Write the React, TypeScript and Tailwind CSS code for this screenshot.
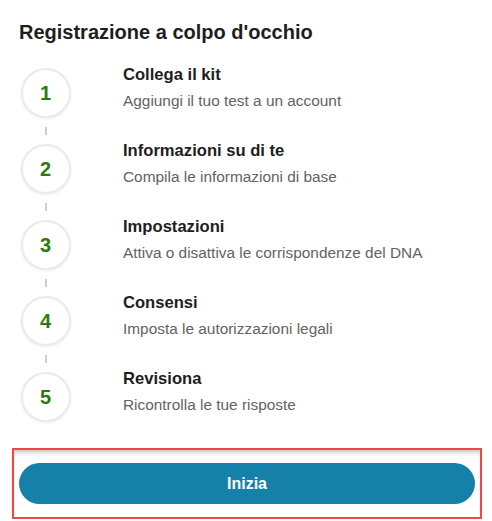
import React from "react";

const steps = [
  { n: 1, title: "Collega il kit", text: "Aggiungi il tuo test a un account" },
  { n: 2, title: "Informazioni su di te", text: "Compila le informazioni di base" },
  { n: 3, title: "Impostazioni", text: "Attiva o disattiva le corrispondenze del DNA" },
  { n: 4, title: "Consensi", text: "Imposta le autorizzazioni legali" },
  { n: 5, title: "Revisiona", text: "Ricontrolla le tue risposte" },
];

export default function App() {
  return (
    <div
      className="w-[492px] h-[521px] bg-white overflow-hidden"
      style={{ fontFamily: '"Liberation Sans", Arial, sans-serif' }}
    >
      <div className="pl-[19px] pt-[20px]">
        <h1 className="text-[20px] leading-6 font-bold text-[#1e1e1e]">
          Registrazione a colpo d'occhio
        </h1>

        <ol className="mt-[24px]">
          {steps.map((step) => (
            <li key={step.n} className="flex h-[76px]">
              <div className="flex flex-col items-center w-[51px] ml-px">
                <div className="w-[50px] h-[50px] shrink-0 rounded-full bg-white border-2 border-[#ebebeb] shadow-[0_1px_3px_rgba(0,0,0,0.08)] flex items-center justify-center">
                  <span className="text-[20px] leading-none font-bold text-[#2c7a0e]">
                    {step.n}
                  </span>
                </div>
                <div className="flex-1 flex items-center">
                  {step.n < steps.length && (
                    <div className="w-[2px] h-[8px] bg-[#cfcfcf]" />
                  )}
                </div>
              </div>
              <div className="ml-[52px] -mt-[5px]">
                <div className="text-[16.6px] leading-6 font-bold text-[#1e1e1e]">
                  {step.title}
                </div>
                <div className="mt-[3px] text-[15.4px] leading-[22px] text-[#636363]">
                  {step.text}
                </div>
              </div>
            </li>
          ))}
        </ol>
      </div>

      <div className="ml-[12px] mr-[10px] border-2 border-[#f24747] px-[5px] pt-[13px] pb-[13px] shadow-[inset_0_5px_5px_-3px_rgba(0,0,0,0.25)]">
        <button className="w-full h-[41px] rounded-full bg-[#1581a8] text-white text-[16px] font-bold">
          Inizia
        </button>
      </div>
    </div>
  );
}
